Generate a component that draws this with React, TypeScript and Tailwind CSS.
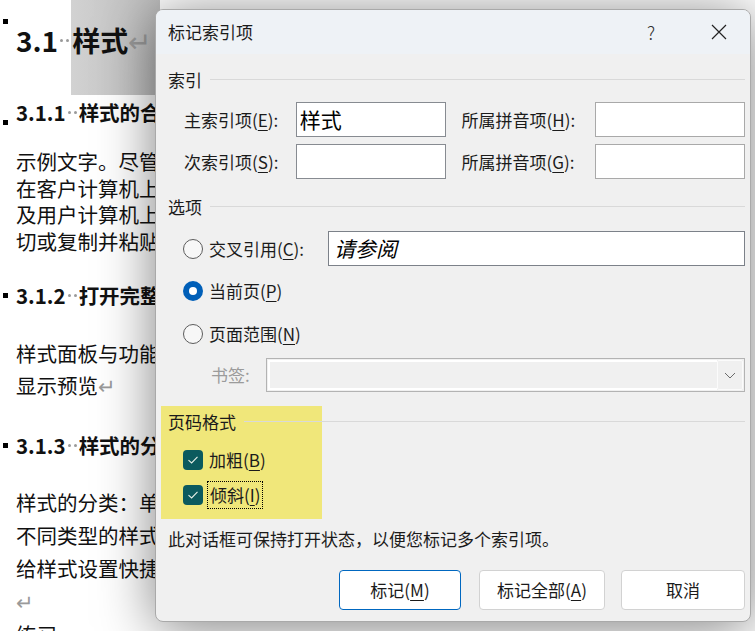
import React from "react";

const F = "font-['Noto_Sans_CJK_SC','Noto_Sans',sans-serif]";

function U({ c }: { c: string }) {
  return <span className="underline underline-offset-[3px] decoration-1">{c}</span>;
}

function Radio({ on }: { on?: boolean }) {
  if (on)
    return (
      <span className="w-[20px] h-[20px] rounded-full bg-[#005fb8] flex items-center justify-center shrink-0">
        <span className="w-[8px] h-[8px] rounded-full bg-white" />
      </span>
    );
  return <span className="w-[20px] h-[20px] rounded-full border border-[#5c5c5c] bg-[#f7f7f7] shrink-0" />;
}

function Check() {
  return (
    <span className="w-[20px] h-[20px] rounded-[4px] bg-[#0b5a5e] flex items-center justify-center shrink-0">
      <svg width="12" height="10" viewBox="0 0 12 10">
        <path d="M1.5 5.2 L4.6 8 L10.5 1.8" fill="none" stroke="#e8f0e8" strokeWidth="1.1" />
      </svg>
    </span>
  );
}

function Section({ title }: { title: string }) {
  return (
    <div className="flex items-center h-[24px]">
      <span className="leading-none">{title}</span>
      <span className="flex-1 h-px bg-[#d9d9d9] ml-[8px]" />
    </div>
  );
}

function Dots({ w }: { w: string }) {
  return (
    <span className={`${w} inline-flex items-center justify-center gap-[3px] self-center shrink-0`}>
      <span className="w-[3px] h-[3px] rounded-full bg-[#9a9a9a]" />
      <span className="w-[3px] h-[3px] rounded-full bg-[#9a9a9a]" />
    </span>
  );
}

function Doc() {
  const ret = <span className="text-[#9a9a9a] font-normal">↵</span>;
  return (
    <div className={`${F} text-[#111] w-[160px] overflow-hidden whitespace-nowrap`}>
      <div className="flex h-[95px]">
        <span className="w-[5px] h-[5px] bg-black ml-[3px] mt-[19px] mr-[8px] shrink-0" />
        <span className="flex items-center pb-[15px] text-[28px] font-bold">3.1</span>
        <span className="flex items-center pb-[15px]">
          <Dots w="w-[13px]" />
        </span>
        <span className="flex items-center pb-[15px] pl-[1px] w-[100px] text-[28px] font-bold bg-[linear-gradient(90deg,#d2d2d2,#bdbdbd)]">
          样式{ret}
        </span>
      </div>
      <div className="flex items-center h-[30px] mt-[2px] text-[20.5px] font-bold">
        <span className="w-[5px] h-[5px] bg-black ml-[3px] mr-[8px] self-end mb-[2px] shrink-0" />
        3.1.1
        <Dots w="w-[13px]" />
        样式的合
      </div>
      <div className="mt-[21px] text-[20.5px] pl-[16px] leading-[26.7px]">
        <div>示例文字。尽管</div>
        <div>在客户计算机上</div>
        <div>及用户计算机上</div>
        <div>切或复制并粘贴</div>
      </div>
      <div className="flex items-center h-[30px] mt-[26px] text-[20.5px] font-bold">
        <span className="w-[5px] h-[5px] bg-black ml-[3px] mr-[8px] shrink-0" />
        3.1.2
        <Dots w="w-[13px]" />
        打开完整
      </div>
      <div className="mt-[26px] text-[20.5px] pl-[16px] leading-[32px]">
        <div>样式面板与功能</div>
        <div>显示预览{ret}</div>
      </div>
      <div className="flex items-center h-[30px] mt-[30px] text-[20.5px] font-bold">
        <span className="w-[5px] h-[5px] bg-black ml-[3px] mr-[8px] shrink-0" />
        3.1.3
        <Dots w="w-[13px]" />
        样式的分
      </div>
      <div className="mt-[25px] text-[20.5px] pl-[16px] leading-[33px]">
        <div>样式的分类：单</div>
        <div>不同类型的样式</div>
        <div>给样式设置快捷</div>
        <div>{ret}</div>
        <div>练习</div>
      </div>
    </div>
  );
}

function Dialog() {
  return (
    <div
      className={`${F} absolute left-[155px] top-[9px] w-[596px] h-[613px] rounded-[8px] border border-[#a9a9a9] bg-[#f0f0f0] overflow-hidden text-[17px] text-[#1b1b1b] shadow-[0_6px_55px_rgba(0,0,0,0.5)]`}
    >
      <div className="h-[44px] bg-[#eef2f6] flex items-center pl-[12px]">
        <span className="flex-1">标记索引项</span>
        <span className="w-[20px] text-center text-[18px] text-[#333] font-light mr-[50px]">?</span>
        <svg width="16" height="16" viewBox="0 0 16 16" className="mr-[23px]">
          <path d="M1 1 L15 15 M15 1 L1 15" stroke="#222" strokeWidth="1.2" />
        </svg>
      </div>
      <div className="pl-[12px] pr-[5px] flex flex-col">
        <div className="mt-[13px]">
          <Section title="索引" />
        </div>
        <div className="flex items-center h-[35px] mt-[11px] pl-[16px]">
          <span className="w-[112px]">
            主索引项(<U c="E" />):
          </span>
          <div className="w-[150px] h-[35px] bg-white border border-[#878b91] flex items-center pl-[3px] text-[21px] text-black">
            样式
          </div>
          <span className="w-[134px] ml-[16px]">
            所属拼音项(<U c="H" />):
          </span>
          <div className="w-[150px] h-[35px] bg-white border border-[#a9a9a9]" />
        </div>
        <div className="flex items-center h-[35px] mt-[7px] pl-[16px]">
          <span className="w-[112px]">
            次索引项(<U c="S" />):
          </span>
          <div className="w-[150px] h-[35px] bg-white border border-[#878b91]" />
          <span className="w-[134px] ml-[16px]">
            所属拼音项(<U c="G" />):
          </span>
          <div className="w-[150px] h-[35px] bg-white border border-[#a9a9a9]" />
        </div>
        <div className="mt-[15px]">
          <Section title="选项" />
        </div>
        <div className="flex items-center h-[35px] mt-[13px] pl-[15px]">
          <Radio />
          <span className="ml-[6px] w-[119px]">
            交叉引用(<U c="C" />):
          </span>
          <div className="flex-1 h-[35px] bg-white border border-[#7c8189] flex items-center pl-[5px] text-[21px] italic text-black">
            请参阅
          </div>
        </div>
        <div className="flex items-center h-[30px] mt-[10px] pl-[15px]">
          <Radio on />
          <span className="ml-[6px]">
            当前页(<U c="P" />)
          </span>
        </div>
        <div className="flex items-center h-[30px] mt-[13px] pl-[15px]">
          <Radio />
          <span className="ml-[6px]">
            页面范围(<U c="N" />)
          </span>
        </div>
        <div className="flex items-center h-[34px] mt-[9px] pl-[43px]">
          <span className="w-[55px] text-[#9b9b9b]">书签:</span>
          <div className="flex-1 h-[34px] border border-[#b3b3b3] bg-[#f0f0f0] p-[1px] flex">
            <div className="flex-1 border-t-[2px] border-l-[2px] border-b-[2px] border-white" />
            <div className="w-[26px] h-full border border-[#fbfbfb] rounded-[2px] flex items-center justify-center">
              <svg width="12" height="7" viewBox="0 0 12 7">
                <path d="M1 1 L6 6 L11 1" fill="none" stroke="#6b6b6b" strokeWidth="1" />
              </svg>
            </div>
          </div>
        </div>
        <div className="relative mt-[14px] h-[113px]">
          <div className="absolute left-[-7px] top-0 w-[161px] h-[113px] bg-[#f0e77a]" />
          <div className="relative pt-[3px]">
            <Section title="页码格式" />
            <div className="flex items-center h-[24px] mt-[15px] pl-[15px]">
              <Check />
              <span className="ml-[6px]">
                加粗(<U c="B" />)
              </span>
            </div>
            <div className="flex items-center h-[24px] mt-[11px] pl-[15px]">
              <Check />
              <span className="ml-[4px] px-[2px] h-[28px] flex items-center border border-dotted border-black">
                倾斜(<U c="I" />)
              </span>
            </div>
          </div>
        </div>
        <div className="h-[24px] mt-[8px] flex items-center">此对话框可保持打开状态，以便您标记多个索引项。</div>
        <div className="flex justify-end mt-[19px] gap-[16px]">
          <button className="w-[122px] h-[40px] rounded-[4px] border border-[#0067c0] bg-white mr-[2px]">
            标记(<U c="M" />)
          </button>
          <button className="w-[126px] h-[40px] rounded-[4px] border border-[#d2d2d2] bg-white">
            标记全部(<U c="A" />)
          </button>
          <button className="w-[124px] h-[40px] rounded-[4px] border border-[#d2d2d2] bg-white">取消</button>
        </div>
      </div>
    </div>
  );
}

export default function App() {
  return (
    <div className="relative w-[755px] h-[631px] bg-white overflow-hidden">
      <Doc />
      <Dialog />
    </div>
  );
}
